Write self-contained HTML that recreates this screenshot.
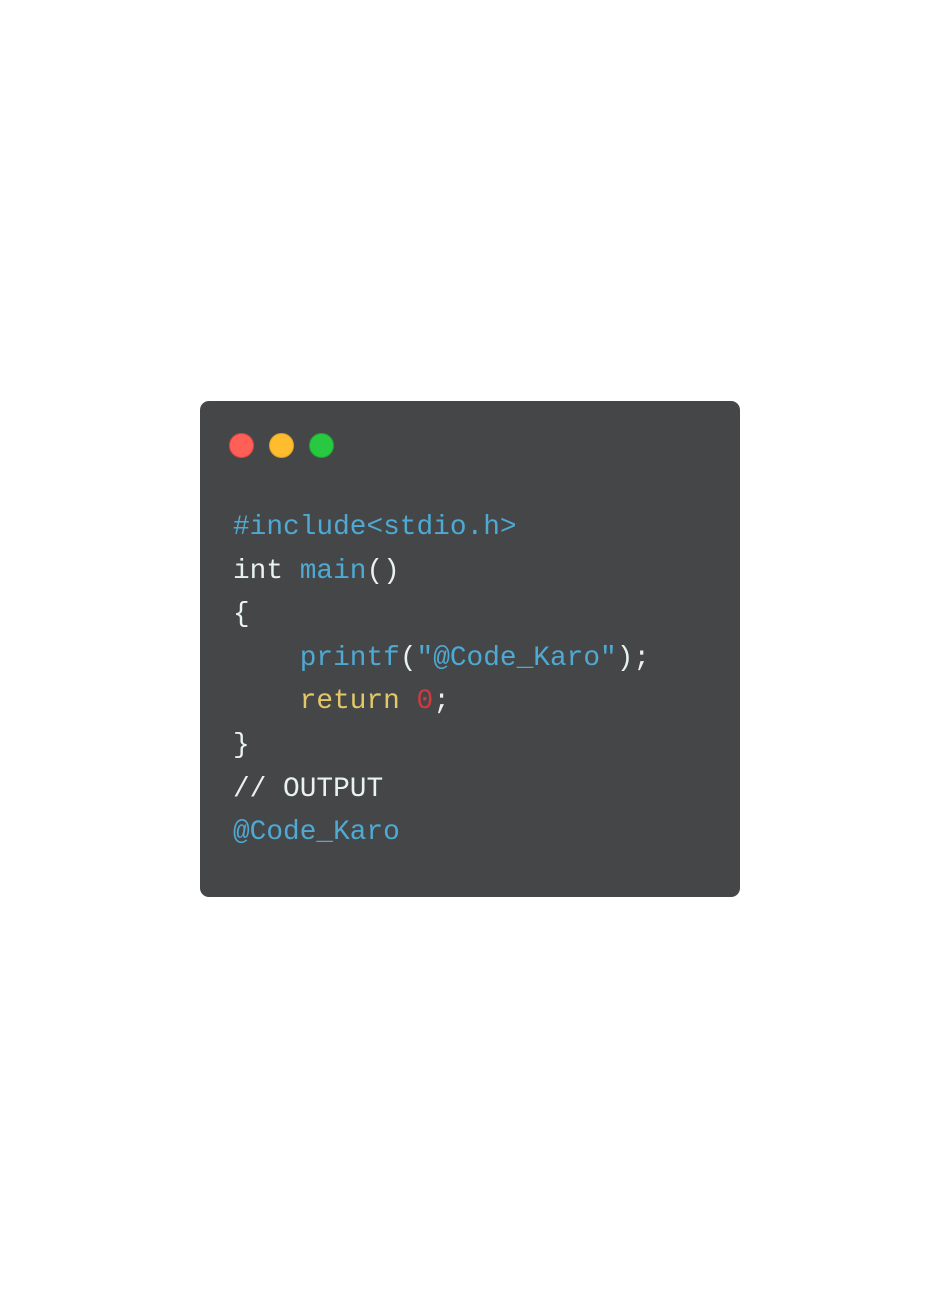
<!DOCTYPE html>
<html><head><meta charset="utf-8"><style>
html,body{margin:0;padding:0;background:#fff;width:940px;height:1298px;overflow:hidden;}
.card{position:absolute;left:200px;top:401px;width:540px;height:496px;background:#454648;border-radius:9px;}
.dot{position:absolute;top:32px;width:25px;height:25px;border-radius:50%;}
pre{position:absolute;left:33px;top:105px;margin:0;font-family:"Liberation Mono",monospace;font-size:27.8px;line-height:43.6px;color:#e8f2ee;white-space:pre;}
.b{color:#4ea9d3}.y{color:#e3c867}.r{color:#cf3a3f}
</style></head><body>
<div class="card">
<div class="dot" style="left:29px;background:#fe5f57;border:0.5px solid #e0443e;box-sizing:border-box"></div>
<div class="dot" style="left:69px;background:#febc2e;border:0.5px solid #dea123;box-sizing:border-box"></div>
<div class="dot" style="left:109px;background:#28c840;border:0.5px solid #1aab29;box-sizing:border-box"></div>
<pre><span class="b">#include&lt;stdio.h&gt;</span>
int <span class="b">main</span>()
{
    <span class="b">printf</span>(<span class="b">"@Code_Karo"</span>);
    <span class="y">return</span> <span class="r">0</span>;
}
// OUTPUT
<span class="b">@Code_Karo</span></pre>
</div>
</body></html>
